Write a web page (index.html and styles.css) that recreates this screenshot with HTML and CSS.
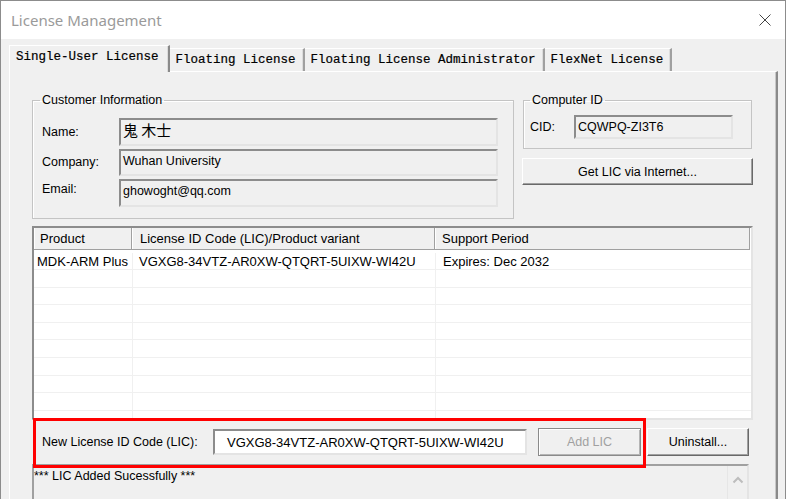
FILE: index.html
```html
<!DOCTYPE html>
<html lang="en">
<head>
  <meta charset="UTF-8" />
  <title>License Management</title>
  <link rel="stylesheet" href="styles.css">
</head>
<body>
  <div class="window">
    <div class="titlebar">
      <span class="title">License Management</span>
      <svg class="close" width="12" height="12" viewBox="0 0 12 12">
        <path d="M0.5 0.5L11.5 11.5M11.5 0.5L0.5 11.5" stroke="#444" stroke-width="1" fill="none"/>
      </svg>
    </div>

    <div class="client">
      <div class="tabs">
        <div class="tab active">Single-User License</div>
        <div class="tab">Floating License</div>
        <div class="tab">Floating License Administrator</div>
        <div class="tab">FlexNet License</div>
      </div>

      <div class="panel">
        <div class="top-row">
          <fieldset class="group customer">
            <legend>Customer Information</legend>
            <div class="field-row">
              <span class="field-label">Name:</span>
              <div class="field cjk">鬼 木士</div>
            </div>
            <div class="field-row">
              <span class="field-label">Company:</span>
              <div class="field">Wuhan University</div>
            </div>
            <div class="field-row">
              <span class="field-label raised">Email:</span>
              <div class="field">ghowoght@qq.com</div>
            </div>
          </fieldset>

          <div class="side">
            <fieldset class="group computer">
              <legend>Computer ID</legend>
              <div class="cid-row">
                <span class="cid-label">CID:</span>
                <div class="field cid">CQWPQ-ZI3T6</div>
              </div>
            </fieldset>
            <button class="btn get-lic">Get LIC via Internet...</button>
          </div>
        </div>

        <div class="listview">
          <div class="lv-header">
            <div class="hcell c1">Product</div>
            <div class="hcell c2">License ID Code (LIC)/Product variant</div>
            <div class="hcell c3">Support Period</div>
          </div>
          <div class="lv-body">
            <div class="lv-row">
              <div class="cell c1">MDK-ARM Plus</div>
              <div class="cell c2">VGXG8-34VTZ-AR0XW-QTQRT-5UIXW-WI42U</div>
              <div class="cell c3">Expires: Dec 2032</div>
            </div>
            <div class="lv-row"><div class="cell c1"></div><div class="cell c2"></div><div class="cell c3"></div></div>
            <div class="lv-row"><div class="cell c1"></div><div class="cell c2"></div><div class="cell c3"></div></div>
            <div class="lv-row"><div class="cell c1"></div><div class="cell c2"></div><div class="cell c3"></div></div>
            <div class="lv-row"><div class="cell c1"></div><div class="cell c2"></div><div class="cell c3"></div></div>
            <div class="lv-row"><div class="cell c1"></div><div class="cell c2"></div><div class="cell c3"></div></div>
            <div class="lv-row"><div class="cell c1"></div><div class="cell c2"></div><div class="cell c3"></div></div>
            <div class="lv-row"><div class="cell c1"></div><div class="cell c2"></div><div class="cell c3"></div></div>
            <div class="lv-row"><div class="cell c1"></div><div class="cell c2"></div><div class="cell c3"></div></div>
            <div class="lv-row"><div class="cell c1"></div><div class="cell c2"></div><div class="cell c3"></div></div>
          </div>
        </div>

        <div class="add-row">
          <span class="add-label">New License ID Code (LIC):</span>
          <div class="field lic-input">VGXG8-34VTZ-AR0XW-QTQRT-5UIXW-WI42U</div>
          <button class="btn add-lic" disabled>Add LIC</button>
          <button class="btn uninstall">Uninstall...</button>
          <div class="highlight"></div>
        </div>

        <div class="status">
          <span class="status-text">*** LIC Added Sucessfully ***</span>
          <div class="scrollbar">
            <svg width="12" height="8" viewBox="0 0 12 8">
              <path d="M1.5 6.5L6 2L10.5 6.5" stroke="#bdbdbd" stroke-width="2" fill="none"/>
            </svg>
          </div>
        </div>
      </div>
    </div>
  </div>
</body>
</html>
```

FILE: styles.css
```css
body {
  margin: 0;
  background: #fff;
  font-family: "Liberation Sans", Arial, sans-serif;
  color: #000;
}

.window {
  width: 786px;
  height: 499px;
  box-sizing: border-box;
  border: 1px solid #8c8c8c;
  border-bottom: none;
  overflow: hidden;
  display: flex;
  flex-direction: column;
}

.titlebar {
  height: 38px;
  flex: none;
  background: #fff;
  display: flex;
  align-items: center;
  justify-content: space-between;
  padding: 0 14px 0 10px;
}

.title {
  font-family: "Noto Sans", sans-serif;
  font-size: 15px;
  color: #9a9a9a;
}

.client {
  flex: 1;
  background: #f0f0f0;
  padding: 0 7px 0 8px;
  display: flex;
  flex-direction: column;
}

/* tabs */
.tabs {
  display: flex;
  align-items: flex-end;
  height: 32px;
  flex: none;
}

.tab {
  font-family: "Liberation Mono", monospace;
  font-size: 12.5px;
  -webkit-text-stroke: 0.2px #000;
  height: 22px;
  line-height: 22px;
  padding: 0 7px 0 6px;
  border-top: 1px solid #fff;
  border-right: 2px solid #a0a0a0;
  box-shadow: inset -1px 0 #dcdcdc;
  white-space: nowrap;
}

.tab.active {
  height: 26px;
  line-height: 23px;
  border-left: 1px solid #fff;
  border-right: 2px solid #8a8a8a;
  padding: 0 9px 0 6px;
  margin-bottom: -1px;
  background: #f0f0f0;
  position: relative;
  z-index: 1;
}

.panel {
  flex: 1;
  border-top: 1px solid #fff;
  border-left: 1px solid #fff;
  border-right: 2px solid #8a8a8a;
  box-shadow: inset -1px 0 #c8c8c8;
  padding: 21px 23px 0 22px;
  font-size: 12.5px;
}

/* group boxes */
.top-row {
  display: flex;
  gap: 8px;
}

.group {
  margin: 0;
  border: 1px solid #c4c4c4;
  box-shadow: inset 1px 1px #fff;
}

.group legend {
  padding: 0 2px;
  line-height: 15px;
  color: #000;
}

.customer {
  width: 482px;
  box-sizing: border-box;
  padding: 10px 15px 11px 9px;
  display: flex;
  flex-direction: column;
  gap: 3px;
}

.customer legend {
  margin-left: -2px;
}

.field-row {
  display: flex;
  align-items: center;
  height: 27.5px;
}

.field-label {
  width: 77px;
  flex: none;
}

.field-label.raised {
  align-self: flex-start;
  padding-top: 3px;
}

.field {
  flex: 1;
  height: 100%;
  box-sizing: border-box;
  border: 2px solid;
  border-color: #8c8c8c #e4e4e4 #e4e4e4 #8c8c8c;
  background: #f0f0f0;
  padding: 3px 2px 0;
  white-space: nowrap;
  overflow: hidden;
}

.field.cjk {
  font-family: "Noto Sans CJK SC", sans-serif;
  font-size: 15px;
  line-height: 17px;
  padding-top: 1px;
}

.side {
  width: 231px;
  display: flex;
  flex-direction: column;
}

.computer {
  margin: 0 1px;
  padding: 7px 18px 9px 6px;
}

.computer legend {
  margin-left: 0;
}

.cid-row {
  display: flex;
  align-items: center;
  height: 24px;
}

.cid-label {
  width: 44px;
}

.field.cid {
  flex: none;
  width: 159px;
  padding-top: 3px;
}

.btn {
  font-family: "Liberation Sans", Arial, sans-serif;
  font-size: 12.5px;
  color: #000;
  background: #f0f0f0;
  height: 28px;
  box-sizing: border-box;
  border: 1px solid;
  border-color: #fff #696969 #696969 #fff;
  box-shadow: inset -1px -1px #a0a0a0;
  padding: 0;
}

.get-lic {
  margin-top: 9px;
  height: 27px;
}

/* list view */
.listview {
  margin-top: 7px;
  height: 194px;
  box-sizing: border-box;
  border: 2px solid;
  border-color: #8c8c8c #e4e4e4 #e4e4e4 #8c8c8c;
  background: #fff;
  font-size: 13px;
  overflow: hidden;
}

.lv-header {
  display: flex;
  height: 21px;
  background: #f0f0f0;
  border-bottom: 1px solid #a0a0a0;
  margin-right: 1px;
}

.hcell {
  line-height: 22px;
  border-right: 1px solid #a0a0a0;
  box-shadow: inset 1px 0 #fff;
  white-space: nowrap;
}

.hcell.c1 {
  width: 98px;
  padding-left: 6px;
  box-sizing: border-box;
}

.hcell.c2 {
  width: 303px;
  padding-left: 8px;
  box-sizing: border-box;
}

.hcell.c3 {
  flex: 1;
  padding-left: 7px;
}

.lv-body {
  padding-top: 3px;
}

.lv-row {
  display: flex;
  height: 17.6px;
  box-sizing: border-box;
  border-bottom: 1px solid #f0f0f0;
}

.cell {
  line-height: 18px;
  white-space: nowrap;
  border-right: 1px solid #f0f0f0;
}

.cell.c1 {
  width: 99px;
  padding-left: 3px;
  box-sizing: border-box;
}

.cell.c2 {
  width: 303px;
  padding-left: 6px;
  box-sizing: border-box;
}

.cell.c3 {
  flex: 1;
  padding-left: 7px;
  border-right: none;
}

/* add LIC row */
.add-row {
  position: relative;
  display: flex;
  align-items: center;
  height: 44px;
  padding-left: 10px;
}

.add-label {
  width: 171px;
  flex: none;
}

.field.lic-input {
  flex: none;
  width: 314px;
  height: 26px;
  background: #fff;
  font-size: 13px;
  padding: 4px 0 0 12px;
}

.add-lic {
  width: 103px;
  margin-left: 11px;
  color: #a0a0a0;
  border: 1px solid #8a8a8a;
  box-shadow: inset 1px 1px #fff, inset -1px -1px #b4b4b4;
}

.uninstall {
  width: 102px;
  margin-left: 6px;
}

.highlight {
  position: absolute;
  left: 1px;
  top: -2px;
  width: 613px;
  height: 50px;
  box-sizing: border-box;
  border: 3px solid #f00;
  pointer-events: none;
}

/* status box */
.status {
  display: flex;
  justify-content: space-between;
  height: 60px;
  margin-right: 4px;
  box-sizing: border-box;
  border: 2px solid;
  border-color: #a0a0a0 #e4e4e4 #e4e4e4 #a0a0a0;
  background: #f0f0f0;
}

.status-text {
  padding: 3px 0 0 0;
}

.scrollbar {
  width: 19px;
  border-left: 1px solid #e6e6e6;
  display: flex;
  justify-content: center;
  padding-top: 10px;
}
```
